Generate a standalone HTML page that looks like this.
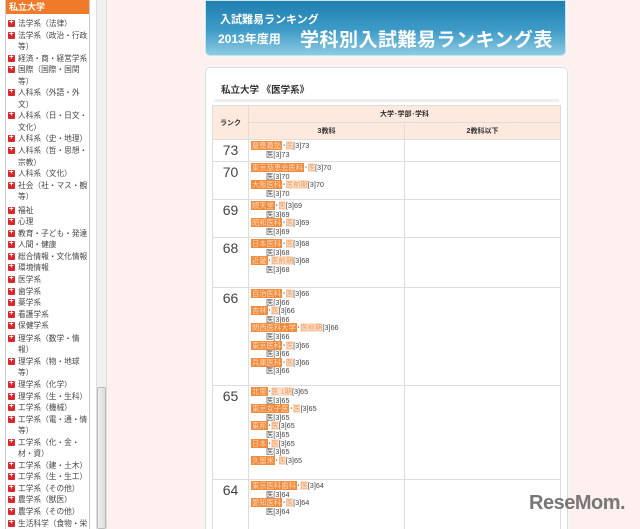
<!DOCTYPE html>
<html><head><meta charset="utf-8"><style>
*{margin:0;padding:0;box-sizing:border-box}
html,body{width:640px;height:529px;overflow:hidden}
body{background:#fdf0ee;font-family:"Liberation Sans","Noto Sans CJK JP",sans-serif;position:relative}
#side{position:absolute;left:0;top:0;width:96px;height:529px;background:#fff}
#sidepanel{position:absolute;left:5px;top:0;width:85px;height:529px;border-left:1px solid #ccc;border-right:1px solid #ccc;background:#fff;overflow:hidden}
#sidehead{background:#f07a2a;color:#fff;font-size:9px;font-weight:bold;height:14px;line-height:14px;padding-left:3px}
#sidepanel ul{list-style:none;font-size:7.7px;color:#444;line-height:11.55px;padding:4px 0 0 2px;white-space:nowrap}
#sidepanel li{position:relative;padding-left:10px}
#sidepanel li:before{content:"";position:absolute;left:0;top:2px;width:7px;height:7px;background:#d9262b;border-radius:1px}
#sidepanel li:after{content:"+";position:absolute;left:1px;top:-1px;color:#fff;font-size:8px;font-weight:bold;line-height:10px}
#scroll{position:absolute;left:96px;top:0;width:11px;height:529px;background:#f0f0f0;border-left:1px solid #ddd;border-right:1px solid #ddd}
#thumb{position:absolute;left:97px;top:387px;width:9px;height:142px;background:linear-gradient(90deg,#eee,#ddd);border:1px solid #bbb;border-radius:2px}
#banner{position:absolute;left:205px;top:0;width:361px;height:56px;border-radius:0 0 5px 5px;background:linear-gradient(180deg,#1f7fb0 0%,#3f9cc8 55%,#8fcbe2 100%);border:1px solid #c9e3ee;box-shadow:0 0 0 2px #f6f6f6}
#b1{position:absolute;left:14px;top:10px;color:#fff;font-size:11px;font-weight:bold}
#b2{position:absolute;left:12px;top:29px;color:#fff;font-size:12px;font-weight:bold}
#b3{position:absolute;left:94px;top:24px;color:#fff;font-size:19px;font-weight:bold;letter-spacing:0.5px}
#panel{position:absolute;left:205px;top:67px;width:363px;height:470px;background:#fff;border:1px solid #ddd;border-radius:5px;box-shadow:0 0 0 2px #f6f6f6}
#ptitle{position:absolute;left:15px;top:14px;font-size:9.5px;font-weight:bold;color:#333}
#psep{position:absolute;left:8px;top:31px;width:345px;height:3px;background:#eee}
table{position:absolute;left:212px;top:105px;width:349px;border-collapse:collapse;font-size:7px;color:#333;table-layout:fixed}
td,th{border:1px solid #ddd;overflow:hidden}
th{background:#fde9de;font-weight:bold;height:17px}
td.r{font-size:14px;color:#444;text-align:center;vertical-align:top;padding-top:2px;width:36px}
td.c{vertical-align:top;padding:2px 0 0 2px;width:156px}
.l{height:8.6px;line-height:8.6px;font-size:7.3px;white-space:nowrap;color:#444}
.u{background:#f08a3c;color:#ffd9b8;padding:0 1px}
.m{color:#f39b5c;background:#fde3cf}
.i{padding-left:15px}
#logo{position:absolute;left:529px;top:492px;font-size:20px;font-weight:bold;color:#777;letter-spacing:-0.5px}
#logos{position:absolute;left:603px;top:497px;font-size:4px;color:#888}
</style></head><body>
<div id="side"><div id="sidepanel"><div id="sidehead">私立大学</div><ul>
<li>法学系（法律）</li><li>法学系（政治・行政<br>等）</li><li>経済・商・経営学系</li><li>国際（国際・国関<br>等）</li><li>人科系（外語・外<br>文）</li><li>人科系（日・日文・<br>文化）</li><li>人科系（史・地理）</li><li>人科系（哲・思想・<br>宗教）</li><li>人科系（文化）</li><li>社会（社・マス・観<br>等）</li><li style="margin-top:2px">福祉</li><li>心理</li><li>教育・子ども・発達</li><li>人間・健康</li><li>総合情報・文化情報</li><li>環境情報</li><li>医学系</li><li>歯学系</li><li>薬学系</li><li>看護学系</li><li>保健学系</li><li style="margin-top:1px">理学系（数学・情<br>報）</li><li>理学系（物・地球<br>等）</li><li>理学系（化学）</li><li>理学系（生・生科）</li><li>工学系（機械）</li><li>工学系（電・通・情<br>等）</li><li>工学系（化・金・<br>材・資）</li><li>工学系（建・土木）</li><li>工学系（生・生工）</li><li>工学系（その他）</li><li>農学系（獣医）</li><li>農学系（その他）</li><li>生活科学（食物・栄</li></ul></div></div>
<div id="scroll"></div><div id="thumb"></div>
<div id="banner"><div id="b1">入試難易ランキング</div><div id="b2">2013年度用</div><div id="b3">学科別入試難易ランキング表</div></div>
<div id="panel"><div id="ptitle">私立大学 《医学系》</div><div id="psep"></div></div>
<table>
<colgroup><col style="width:36px"><col style="width:156px"><col></colgroup>
<tr><th rowspan="2">ランク</th><th colspan="2">大学･学部･学科</th></tr>
<tr><th>3教科</th><th>2教科以下</th></tr>
<tr style="height:22px"><td class="r">73</td><td class="c"><div class="l"><span class="u">慶應義塾</span>･<span class="m">医</span>[3]73</div><div class="l i">医[3]73</div></td><td></td></tr>
<tr style="height:38px"><td class="r">70</td><td class="c"><div class="l"><span class="u">東京慈恵会医科</span>･<span class="m">医</span>[3]70</div><div class="l i">医[3]70</div><div class="l"><span class="u">大阪医科</span>･<span class="m">医前期</span>[3]70</div><div class="l i">医[3]70</div></td><td></td></tr>
<tr style="height:38px"><td class="r">69</td><td class="c"><div class="l"><span class="u">順天堂</span>･<span class="m">医</span>[3]69</div><div class="l i">医[3]69</div><div class="l"><span class="u">昭和医科</span>･<span class="m">医</span>[3]69</div><div class="l i">医[3]69</div></td><td></td></tr>
<tr style="height:50px"><td class="r">68</td><td class="c"><div class="l"><span class="u">日本医科</span>･<span class="m">医</span>[3]68</div><div class="l i">医[3]68</div><div class="l"><span class="u">近畿</span>･<span class="m">医前期</span>[3]68</div><div class="l i">医[3]68</div></td><td></td></tr>
<tr style="height:98px"><td class="r">66</td><td class="c"><div class="l"><span class="u">自治医科</span>･<span class="m">医</span>[3]66</div><div class="l i">医[3]66</div><div class="l"><span class="u">杏林</span>･<span class="m">医</span>[3]66</div><div class="l i">医[3]66</div><div class="l"><span class="u">関西医科大学</span>･<span class="m">医前期</span>[3]66</div><div class="l i">医[3]66</div><div class="l"><span class="u">東京医科</span>･<span class="m">医</span>[3]66</div><div class="l i">医[3]66</div><div class="l"><span class="u">兵庫医科</span>･<span class="m">医</span>[3]66</div><div class="l i">医[3]66</div></td><td></td></tr>
<tr style="height:94px"><td class="r">65</td><td class="c"><div class="l"><span class="u">北里</span>･<span class="m">医 1期</span>[3]65</div><div class="l i">医[3]65</div><div class="l"><span class="u">東京女子医</span>･<span class="m">医</span>[3]65</div><div class="l i">医[3]65</div><div class="l"><span class="u">東邦</span>･<span class="m">医</span>[3]65</div><div class="l i">医[3]65</div><div class="l"><span class="u">日本</span>･<span class="m">医</span>[3]65</div><div class="l i">医[3]65</div><div class="l"><span class="u">久留米</span>･<span class="m">医</span>[3]65</div></td><td></td></tr>
<tr style="height:50px"><td class="r">64</td><td class="c"><div class="l"><span class="u">東京医科歯科</span>･<span class="m">医</span>[3]64</div><div class="l i">医[3]64</div><div class="l"><span class="u">愛知医科</span>･<span class="m">医</span>[3]64</div><div class="l i">医[3]64</div></td><td></td></tr>
</table>
<div id="logo">ReseMom.</div><div id="logos">リセマム</div>
</body></html>
